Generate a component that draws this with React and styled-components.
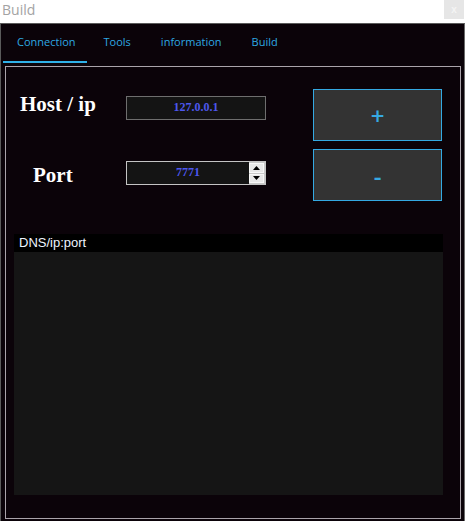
import React from "react";
import styled, { createGlobalStyle } from "styled-components";

const Global = createGlobalStyle`
  html, body { margin: 0; padding: 0; background: #ffffff; }
  body { width: 465px; height: 521px; overflow: hidden; }
  * { box-sizing: border-box; }
`;

const Frame = styled.div`
  width: 465px;
  height: 521px;
  display: flex;
  flex-direction: column;
  background: #ffffff;
`;

const TitleBar = styled.div`
  height: 23px;
  display: flex;
  align-items: flex-start;
  justify-content: space-between;
  background: #ffffff;
`;

const Title = styled.span`
  font-family: "Open Sans", "Noto Sans", sans-serif;
  font-size: 14px;
  line-height: 20px;
  color: #a3a3a3;
  padding-left: 2px;
`;

const CloseButton = styled.div`
  width: 20px;
  height: 19px;
  margin-right: 1px;
  background: #e6e6e6;
  color: #f4f4f4;
  font-family: "Liberation Sans", sans-serif;
  font-size: 10px;
  font-weight: bold;
  display: flex;
  align-items: center;
  justify-content: center;
`;

const Window = styled.div`
  flex: 1;
  display: flex;
  flex-direction: column;
  background: #0b0309;
  border-top: 1px solid #5a5a5a;
  border-left: 1px solid #5a5a5a;
  border-right: 1px solid #6a6a6a;
`;

const TabBar = styled.div`
  height: 39px;
  display: flex;
  align-items: stretch;
  padding-left: 2px;
`;

const Tab = styled.div`
  display: flex;
  align-items: center;
  padding: 0 ${(p) => p.$pr}px 2px ${(p) => p.$pl}px;
  font-family: "Open Sans", "Noto Sans", sans-serif;
  font-size: 11px;
  color: #2ea9e3;
  border-bottom: 2px solid ${(p) => (p.$active ? "#2fb1e8" : "transparent")};
  height: 39px;
`;

const Panel = styled.div`
  flex: 1;
  margin: 3px 3px 2px 4px;
  border: 1px solid #aaa3aa;
  display: flex;
  flex-direction: column;
  padding: 22px 0 0 0;
`;

const Form = styled.div`
  display: grid;
  grid-template-columns: 120px 140px 47px 129px;
  grid-template-rows: 52px 52px;
  row-gap: 8px;
`;

const Label = styled.div`
  grid-column: 1;
  grid-row: ${(p) => p.$row};
  font-family: "Liberation Serif", "Times New Roman", serif;
  font-weight: bold;
  font-size: 21px;
  color: #ffffff;
  padding-left: ${(p) => p.$indent}px;
  margin-top: ${(p) => p.$top}px;
  line-height: 22px;
`;

const InputBox = styled.div`
  grid-column: 2;
  grid-row: ${(p) => p.$row};
  align-self: start;
  margin-top: ${(p) => p.$top}px;
  height: 24px;
  background: #141414;
  border: 1px solid ${(p) => p.$border};
  display: flex;
  align-items: stretch;
`;

const Value = styled.div`
  flex: 1;
  display: flex;
  align-items: center;
  justify-content: center;
  font-family: "Liberation Serif", "Times New Roman", serif;
  font-weight: bold;
  font-size: 12px;
  color: #4d57ee;
  padding-bottom: 2px;
`;

const Spinner = styled.div`
  width: 16px;
  display: flex;
  flex-direction: column;
  gap: 1px;
  padding: 1px 1px 1px 0;
  background: #c8c8c8;
`;

const SpinButton = styled.div`
  flex: 1;
  background: #e8e8e8;
  border: 1px solid #f8f8f8;
  display: flex;
  align-items: center;
  justify-content: center;
`;

const ActionButton = styled.div`
  grid-column: 4;
  grid-row: ${(p) => p.$row};
  background: #333333;
  border: 1px solid #34a9e2;
  color: #36a9e2;
  font-family: "Open Sans", "Noto Sans", sans-serif;
  font-weight: 600;
  font-size: 24px;
  display: flex;
  align-items: center;
  justify-content: center;
`;

const ListBox = styled.div`
  margin: 33px 0 0 8px;
  width: 429px;
  height: 261px;
  display: flex;
  flex-direction: column;
  background: #151515;
`;

const ListHeader = styled.div`
  height: 18px;
  background: #000000;
  font-family: "Liberation Sans", Arial, sans-serif;
  font-size: 13px;
  line-height: 17px;
  color: #eef4ff;
  padding-left: 5px;
`;

const Arrow = ({ up }) => (
  <svg width="7" height="4" viewBox="0 0 7 4">
    <polygon points={up ? "3.5,0 7,4 0,4" : "0,0 7,0 3.5,4"} fill="#000" />
  </svg>
);

export default function App() {
  return (
    <>
      <Global />
      <Frame>
        <TitleBar>
          <Title>Build</Title>
          <CloseButton>x</CloseButton>
        </TitleBar>
        <Window>
          <TabBar>
            <Tab $active $pl={14} $pr={11}>Connection</Tab>
            <Tab $pl={17} $pr={15}>Tools</Tab>
            <Tab $pl={15} $pr={15}>information</Tab>
            <Tab $pl={15} $pr={15}>Build</Tab>
          </TabBar>
          <Panel>
            <Form>
              <Label $row={1} $indent={14} $top={4}>Host / ip</Label>
              <InputBox $row={1} $top={7} $border="#6e6e6e">
                <Value>127.0.0.1</Value>
              </InputBox>
              <ActionButton $row={1}>+</ActionButton>
              <Label $row={2} $indent={27} $top={15}>Port</Label>
              <InputBox $row={2} $top={12} $border="#c4c4c4">
                <Value>7771</Value>
                <Spinner>
                  <SpinButton><Arrow up /></SpinButton>
                  <SpinButton><Arrow /></SpinButton>
                </Spinner>
              </InputBox>
              <ActionButton $row={2}>-</ActionButton>
            </Form>
            <ListBox>
              <ListHeader>DNS/ip:port</ListHeader>
            </ListBox>
          </Panel>
        </Window>
      </Frame>
    </>
  );
}
